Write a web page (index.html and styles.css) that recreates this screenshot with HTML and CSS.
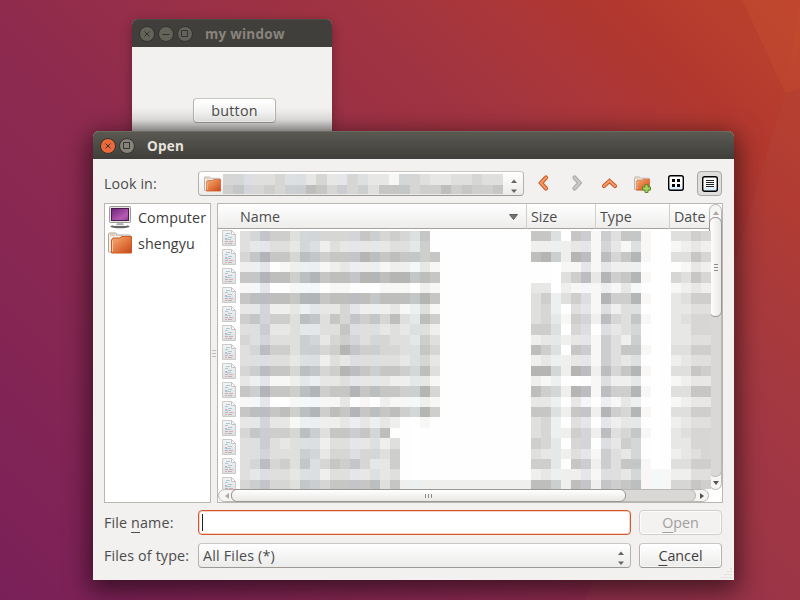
FILE: index.html
```html
<!DOCTYPE html>
<html lang="en">
<head>
    <meta charset="UTF-8">
    <meta name="viewport" content="width=device-width, initial-scale=1.0">
    <title>Open</title>
    <link rel="stylesheet" href="styles.css">
</head>
<body>

<svg class="wallpaper" width="800" height="600" viewBox="0 0 800 600">
    <path d="M742 0H800V88L785 93Z" fill="#d06030" opacity=".2"/>
    <path d="M785 93L800 88V600H585L735 260Z" fill="#b06050" opacity=".1"/>
    <path d="M785 93L800 45V0Z" fill="#d06030" opacity=".08"/>
</svg>

<div class="window back-window">
    <div class="titlebar inactive">
        <svg class="ctl" viewBox="0 0 16 16"><circle cx="8" cy="8" r="7.5"/><path d="M5.5 5.5l5 5M10.5 5.500l-5 5"/></svg>
        <svg class="ctl" viewBox="0 0 16 16"><circle cx="8" cy="8" r="7.5"/><path d="M4.5 8.500h7"/></svg>
        <svg class="ctl" viewBox="0 0 16 16"><circle cx="8" cy="8" r="7.5"/><path d="M4.500 4.500h6v6h-6z"/></svg>
        <span class="title">my window</span>
    </div>
    <div class="back-body"><button class="btn small-btn">button</button></div>
</div>

<div class="window dialog">
    <div class="titlebar">
        <svg class="ctl close" viewBox="0 0 16 16"><circle cx="8" cy="8" r="7.5"/><path d="M5.5 5.5l5 5M10.5 5.5l-5 5"/></svg>
        <svg class="ctl" viewBox="0 0 16 16"><circle cx="8" cy="8" r="7.5"/><path d="M4.500 4.500h6v6h-6z"/></svg>
        <span class="title">Open</span>
    </div>
    <div class="dialog-body">
        <div class="toolbar">
            <label class="look">Look in:</label>
            <div class="combo look-combo">
                <svg class="folder" width="17" height="16" viewBox="0 0 24 21"><use href="#folder"/></svg>
                <div class="mosaic path" id="path"></div>
                <svg class="spin" width="8" height="16" viewBox="0 0 8 16"><path d="M1 5l3-3.500 3 3.500zM1 11.500l3 3.500 3-3.500z"/></svg>
            </div>
            <div class="tools">
                <svg class="tool" viewBox="0 0 24 24"><path class="arrow-edge" d="M14 5.500l-5 5.500 5 5.500"/><path class="arrow" d="M14 5.500l-5 5.500 5 5.500"/></svg>
                <svg class="tool off" viewBox="0 0 24 24"><path class="arrow-edge" d="M9.500 5.500l5 5.500-5 5.500"/><path class="arrow" d="M9.500 5.500l5 5.500-5 5.500"/></svg>
                <svg class="tool" viewBox="0 0 24 24"><path class="arrow-edge" d="M6 14l5.500-5 5.500 5"/><path class="arrow" d="M6 14l5.500-5 5.500 5"/></svg>
                <svg class="tool" viewBox="0 0 24 24">
                    <svg x="3" y="4" width="16" height="15" viewBox="0 0 24 21"><use href="#folder"/></svg>
                    <path d="M14 12.500h3v2.500h2.500v3h-2.500v2.500h-3v-2.500h-2.500v-3h2.500z" fill="#a8cf62" stroke="#5b8a28"/>
                </svg>
                <svg class="tool" viewBox="0 0 24 24">
                    <rect x="4.700" y="3.700" width="14.600" height="14.600" rx="2" fill="url(#paper)" stroke="#000" stroke-width="1.400"/>
                    <path d="M8 7h3v3H8zM13 7h3v3h-3zM8 12h3v3H8zM13 12h3v3h-3z"/>
                </svg>
                <div class="pressed">
                    <svg class="tool" viewBox="0 0 24 24">
                        <rect x="4.700" y="4.700" width="14.600" height="14.600" rx="2" fill="url(#paper)" stroke="#000" stroke-width="1.400"/>
                        <path d="M8 8.500h8M8 10.500h8M8 12.500h8M8 14.500h8" stroke="#222"/>
                    </svg>
                </div>
            </div>
        </div>

        <div class="panes">
            <div class="places">
                <div class="place">
                    <svg width="24" height="24" viewBox="0 0 24 24">
                        <rect x="1.500" y="1.500" width="21" height="16" rx="1" fill="#e4e4e0" stroke="#999993"/>
                        <rect x="3.500" y="3.500" width="17" height="12" fill="url(#screen)" stroke="#4a1a50"/>
                        <path d="M9 18h6l1 2H8z" fill="#bbb"/>
                        <ellipse cx="12" cy="21.500" rx="9.500" ry="1.800" fill="#666"/>
                        <path d="M5 20.500h14" stroke="#eee"/>
                    </svg>
                    <span>Computer</span>
                </div>
                <div class="place">
                    <svg width="24" height="22" viewBox="0 0 24 21"><use href="#folder"/></svg>
                    <span>shengyu</span>
                </div>
            </div>
            <div class="grip"><i></i><i></i><i></i></div>
            <div class="files">
                <div class="columns">
                    <div class="col name">Name <svg width="9" height="6" viewBox="0 0 9 6"><path d="M.5.5h8L4.500 5.500z" fill="#77756f" stroke="#605e58"/></svg></div>
                    <div class="col">Size</div>
                    <div class="col">Type</div>
                    <div class="col">Date</div>
                </div>
                <div class="list">
                    <div class="icons" id="icons"></div>
                    <div class="mosaic rows" id="rows"></div>
                </div>
                <div class="hscroll">
                    <div class="step left"><svg width="4" height="6" viewBox="0 0 4 6"><path d="M4 0v6L0 3z"/></svg></div>
                    <div class="htrack">
                        <div class="hthumb"><i></i><i></i><i></i></div>
                    </div>
                    <div class="step right"><svg width="4" height="6" viewBox="0 0 4 6"><path d="M0 0v6l4-3z"/></svg></div>
                </div>
                <div class="vscroll">
                    <div class="step up"><svg width="6" height="4" viewBox="0 0 6 4"><path d="M0 4h6L3 0z"/></svg></div>
                    <div class="vtrack">
                        <div class="vthumb"><i></i><i></i><i></i></div>
                    </div>
                    <div class="step down"><svg width="6" height="4" viewBox="0 0 6 4"><path d="M0 0h6L3 4z"/></svg></div>
                </div>
            </div>
        </div>

        <div class="form">
            <label>File <u>n</u>ame:</label>
            <div class="input"><span class="caret"></span></div>
            <button class="btn disabled"><span><u>O</u>pen</span></button>
            <label>Files of type:</label>
            <div class="combo">
                <span class="value">All Files (*)</span>
                <svg class="spin" width="8" height="16" viewBox="0 0 8 16"><path d="M1 5l3-3.500 3 3.500zM1 11.500l3 3.500 3-3.500z"/></svg>
            </div>
            <button class="btn"><span><u>C</u>ancel</span></button>
        </div>
    </div>
    <svg class="resize" width="12" height="12" viewBox="0 0 12 12"><path d="M10 1v1M7 4v1M10 4v1M4 7v1M7 7v1M10 7v1M1 10v1M4 10v1M7 10v1M10 10v1" stroke="#d0cecb" stroke-width="1.200"/></svg>
</div>

<svg class="defs" width="0" height="0">
    <defs>
        <linearGradient id="orange" x1="0" y1="0" x2="1" y2="1"><stop offset="0" stop-color="#f3b27a"/><stop offset=".5" stop-color="#e37a42"/><stop offset="1" stop-color="#c5471a"/></linearGradient>
        <linearGradient id="screen" x1="0" y1="0" x2="1" y2="1"><stop offset="0" stop-color="#6b2474"/><stop offset=".7" stop-color="#b75bb5"/><stop offset="1" stop-color="#8a3a90"/></linearGradient>
        <linearGradient id="paper" x1="0" y1="0" x2="0" y2="1"><stop offset=".5" stop-color="#fff"/><stop offset="1" stop-color="#cfe6fa"/></linearGradient>
        <linearGradient id="sheet" x1="0" y1="0" x2="0" y2="1"><stop offset="0" stop-color="#f4f4f4"/><stop offset="1" stop-color="#dedede"/></linearGradient>
        <g id="folder">
            <path d="M.5 19V1.500Q.5.500 1.500.500H7.500Q8.500.500 8.500 1.500V2.500H21.500Q22.500 2.500 22.500 3.500V6" fill="#f2f0ed" stroke="#aaa69f"/>
            <path d="M.5 3V19.500H3" fill="none" stroke="#aaa69f"/>
            <path d="M2 2.500h5" stroke="#e9a060"/>
            <path d="M3.500 20.500V7.500L5 5.500h7l1.500-1.500H23.500V20.500z" fill="url(#orange)" stroke="#cf5a22"/>
            <path d="M4.500 19V8" stroke="#f9c695"/>
        </g>
        <g id="file">
            <path d="M.5.500H9.500L13.500 4.500V15.500H.5z" fill="url(#sheet)" stroke="#cbcbcb"/>
            <path d="M9.500.500V4.500H13.500z" fill="#fff" stroke="#c4c4c4"/>
            <path d="M4 3.500h4M3 5.500h3M6 7.500h4M3 9.500h6" stroke="#a3cbdc"/>
            <path d="M3 8.500h2M7 11.500h4M3 13.500h2" stroke="#dfa6bf"/>
            <path d="M3 11.500h3M6 13.500h4" stroke="#b3b3b8"/>
        </g>
    </defs>
</svg>

<script src="script.js"></script>
</body>
</html>
```

FILE: styles.css
```css
* {
    box-sizing: border-box;
}
body {
    margin: 0;
    width: 800px;
    height: 600px;
    overflow: hidden;
    position: relative;
    font-family: "Open Sans", "Noto Sans", sans-serif;
    font-size: 14.300px;
    color: #4c4c4c;
    background: linear-gradient(45deg, #7a2059 0%, #8f2b4e 42%, #a4353f 72%, #b2382f 86%, #bd432c 100%);
}
.wallpaper {
    position: absolute;
    left: 0;
    top: 0;
}
.defs {
    position: absolute;
}
.window {
    position: absolute;
    background: #f2f1f0;
    border-radius: 6px 6px 0 0;
}
.back-window {
    left: 132px;
    top: 19px;
    width: 200px;
    height: 150px;
    box-shadow: 0 3px 12px rgba(0,0,0,0.3);
}
.dialog {
    left: 93px;
    top: 131px;
    width: 641px;
    height: 449px;
    box-shadow: 0 7px 24px 4px rgba(0,0,0,0.55);
}
.titlebar {
    height: 28px;
    display: flex;
    align-items: center;
    gap: 3px;
    padding: 1px 0 0 7px;
    border-radius: 6px 6px 0 0;
    background: linear-gradient(#5b5a52, #3f3e3a);
    box-shadow: inset 0 1px 0 #6b6a61;
    color: #e8e4dc;
    font-weight: bold;
}
.titlebar.inactive {
    background: #403f3b;
    box-shadow: inset 0 1px 0 #4c4b46;
    color: #89847c;
}
.title {
    margin-left: 9px;
    font-size: 13.500px;
    letter-spacing: 0.250px;
}
.ctl {
    width: 16px;
    height: 16px;
    fill: #85837a;
    stroke: #33322e;
}
.ctl path {
    fill: none;
}
.ctl.close {
    fill: #ec6a3a;
}
.inactive .ctl {
    fill: #64635a;
}
.back-body {
    height: 122px;
    padding: 51px 0 0 61px;
    background: linear-gradient(#f2f1f0 50%, #e4e3e2 60%, #a5a4a3 70%);
}
.btn {
    width: 83px;
    height: 25px;
    padding: 0;
    border: 1px solid #b5b2ad;
    border-top-color: #c9c7c3;
    border-bottom-color: #9c9994;
    border-radius: 4px;
    background: linear-gradient(#ffffff, #ececeb);
    box-shadow: inset 0 0 0 1px rgba(255,255,255,0.7);
    font: inherit;
    line-height: 22px;
    color: #3f3f3f;
}
.small-btn {
    color: #4c4c4c;
    letter-spacing: 0.250px;
}
.btn.disabled {
    color: #a09f9c;
    border-color: #d2cfcb;
    background: #f3f2f1;
}
u {
    text-underline-offset: 4px;
    text-decoration-thickness: 1px;
}
.dialog-body {
    padding: 12px 11px;
}
.toolbar {
    display: flex;
    align-items: center;
    height: 25px;
}
.look {
    width: 94px;
    letter-spacing: 0.100px;
}
.combo {
    height: 25px;
    display: flex;
    align-items: center;
    border: 1px solid #b5b2ad;
    border-top-color: #c9c7c3;
    border-bottom-color: #9c9994;
    border-radius: 4px;
    background: linear-gradient(#ffffff, #ebebea);
    padding: 0 5px 0 4px;
}
.look-combo {
    width: 326px;
    padding-left: 5px;
}
.spin {
    margin-left: auto;
    margin-top: 5px;
    fill: #666460;
}
.mosaic {
    display: grid;
}
.path {
    width: 280px;
    height: 20px;
    margin-left: 2px;
    grid-template-columns: repeat(27, 1fr);
    grid-template-rows: 11px 9px;
}
.tools {
    display: flex;
    align-items: center;
    gap: 9px;
    margin-left: 8px;
}
.tool {
    width: 24px;
    height: 24px;
    flex: none;
}
.arrow-edge {
    fill: none;
    stroke: #c9592c;
    stroke-width: 4.200;
    stroke-linecap: round;
}
.arrow {
    fill: none;
    stroke: #f09a62;
    stroke-width: 2.200;
    stroke-linecap: round;
}
.off .arrow-edge {
    stroke: #a9a9a6;
}
.off .arrow {
    stroke: #c9c9c6;
}
.pressed {
    width: 25px;
    height: 25px;
    border: 1px solid #aaa7a2;
    border-radius: 4px;
    background: #dfdedd;
}
.pressed .tool {
    display: block;
    margin: -0.500px;
}
.panes {
    display: flex;
    height: 300px;
    margin-top: 7px;
}
.places {
    width: 107px;
    border: 1px solid #bab7b2;
    background: #fff;
    padding: 0 3px;
}
.place {
    display: flex;
    align-items: center;
    gap: 6px;
    height: 26px;
    white-space: nowrap;
    color: #3c3c3c;
    letter-spacing: 0.100px;
}
.grip {
    width: 6px;
    display: flex;
    flex-direction: column;
    align-items: center;
    justify-content: center;
    gap: 2px;
}
.grip i {
    width: 4px;
    height: 1px;
    background: #bebcb8;
}
.files {
    position: relative;
    width: 506px;
    border: 1px solid #bab7b2;
    background: #fff;
}
.columns {
    display: grid;
    grid-template-columns: 309px 69px 74px 1fr;
    height: 25px;
    border-bottom: 1px solid #a5a39f;
    background: linear-gradient(#ffffff, #eeedec);
    line-height: 25px;
}
.col {
    padding-left: 4px;
    border-right: 1px solid #d2cfcb;
}
.col:last-child {
    border-right: none;
}
.col.name {
    display: flex;
    align-items: center;
    justify-content: space-between;
    padding: 0 8px 0 22px;
}
.list {
    display: flex;
    height: 260px;
    overflow: hidden;
}
.icons {
    width: 22px;
    padding: 1px 0 0 4px;
}
.icons svg {
    display: block;
    width: 14px;
    height: 16px;
    margin-bottom: 3px;
}
.rows {
    position: relative;
    z-index: 1;
    width: 471px;
    height: 259px;
    margin-top: 2px;
    grid-template-columns: repeat(47, 1fr);
    grid-template-rows: repeat(25, 1fr);
}
.hscroll {
    display: flex;
    width: 491px;
    height: 13px;
    border: 1px solid #b9b7b3;
    border-radius: 7px;
    background: #f6f5f4;
}
.htrack {
    width: 465px;
    height: 13px;
    margin-top: -1px;
    border: 1px solid #b9b7b3;
    border-left: none;
    border-radius: 7px;
    background: #d9d8d6;
}
.hthumb,
.vthumb {
    display: flex;
    align-items: center;
    justify-content: center;
    gap: 2px;
    border: 1px solid #9a9894;
    border-radius: 6px;
}
.hthumb {
    width: 395px;
    height: 13px;
    margin-top: -1px;
    background: linear-gradient(#ffffff, #e9e8e6);
}
.hthumb i {
    width: 1px;
    height: 4px;
    background: #8d8b88;
}
.step {
    display: flex;
    align-items: center;
    justify-content: center;
    fill: #55534f;
}
.step.left {
    width: 16px;
    margin-right: -4px;
    fill: #aaa8a4;
}
.step.right {
    width: 12px;
}
/* the vertical bar runs over the column header */
.vscroll {
    position: absolute;
    top: 0;
    right: 0;
    width: 13px;
    height: 286px;
    display: flex;
    flex-direction: column;
    border: 1px solid #b9b7b3;
    border-radius: 7px;
    background: #f6f5f4;
}
.vtrack {
    width: 13px;
    height: 260px;
    margin-left: -1px;
    border: 1px solid #b9b7b3;
    border-top: none;
    border-radius: 7px;
    background: #d9d8d6;
}
.vthumb {
    flex-direction: column;
    width: 13px;
    height: 100px;
    margin-left: -1px;
    background: linear-gradient(to right, #ffffff, #e9e8e6);
}
.vthumb i {
    width: 4px;
    height: 1px;
    background: #8d8b88;
}
.step.up {
    height: 16px;
    margin-bottom: -4px;
    fill: #aaa8a4;
}
.step.down {
    height: 12px;
}
.form {
    display: grid;
    grid-template-columns: 94px 433px 83px;
    column-gap: 0;
    row-gap: 8px;
    align-items: center;
    margin-top: 7px;
}
.form .btn {
    margin-left: 8px;
}
.form label {
    white-space: nowrap;
    letter-spacing: 0.150px;
}
.value {
    letter-spacing: 0.200px;
}
.input {
    height: 25px;
    border: 1px solid #d2582c;
    box-shadow: inset 0 0 0 1px #f6d3c5;
    border-radius: 4px;
    background: #fff;
    padding: 3px;
}
.caret {
    display: block;
    width: 1px;
    height: 17px;
    background: #222;
}
.resize {
    position: absolute;
    right: 1px;
    bottom: 1px;
}
```

FILE: script.js
```js
// 0 = lightest, 9 = darkest
const TONES = [254, 247, 239, 231, 223, 214, 206, 198, 190, 181];

const NAME = [
    '45766455555576565470', '43344354243333344360', '57977587677798787767', '22301222123222122131',
    '77988689788799899787', '11300111011000111021', '78888799788887888797', '33522323335322231241',
    '67566487475767584386', '44633433447444343442', '54544465356545544364', '45866466569766554475',
    '44444344243444443453', '56877587569876776584', '32311232334333322331', '76977689677978776695',
    '11300111113010211121', '78878689687978786596', '33533122223232320010', '57666586477675800000',
    '44643444244334240000', '44544465355455460000', '45856474576753360000', '43444344244334340000',
    '56755476577778472222'
];
const REST = [
    '774076164771004465', '222233153141001232', '896298185791004475', '000113132220000132',
    '000468396791005475', '330211121310001232', '462464196691003466', '452043142440003344',
    '453165285471003455', '664054043450003355', '233233164260003344', '864076164771004466',
    '232233164340002344', '995298285791004476', '212000142230001233', '865298186691004477',
    '332031021320001233', '774277296591004466', '452043032330002344', '452265284571003455',
    '653055043650003355', '433243164350002345', '663076264771004466', '232223144351112244',
    '886287276781115576'
];
const PATH = ['554445443533543315543344544', '675565668756564777566867667'];

// warm, neutral or cool shift of a column
const TINT = 'wcbnnncbnnnbwcnnncnnnnnnnnnnnnncnwbwbnncwcnnnwwn';

function fill(id, lines) {
    const box = document.getElementById(id);
    lines.forEach(function(line) {
        for (let i = 0; i < line.length; i++) {
            const n = Number(line[i]);
            const v = TONES[n];
            const t = TINT[i];
            const s = n === 0 ? 0 : 2;
            let rgb = [v, v, v - (s ? 1 : 0)];
            if (t === 'w') rgb = [v + s, v, v - s];
            if (t === 'c') rgb = [v - s, v + 1, v + s];
            if (t === 'b') rgb = [v - s, v - 1, v + s];
            const cell = document.createElement('span');
            cell.style.background = 'rgb(' + rgb.join(',') + ')';
            box.appendChild(cell);
        }
    });
}

fill('path', PATH);
fill('rows', NAME.map(function(line, i) {
    return line + (i === 24 ? '222222222' : '000000000') + REST[i];
}));

let icons = '';
for (let i = 0; i < 14; i++) {
    icons += '<svg viewBox="0 0 14 16"><use href="#file"/></svg>';
}
document.getElementById('icons').innerHTML = icons;
```
